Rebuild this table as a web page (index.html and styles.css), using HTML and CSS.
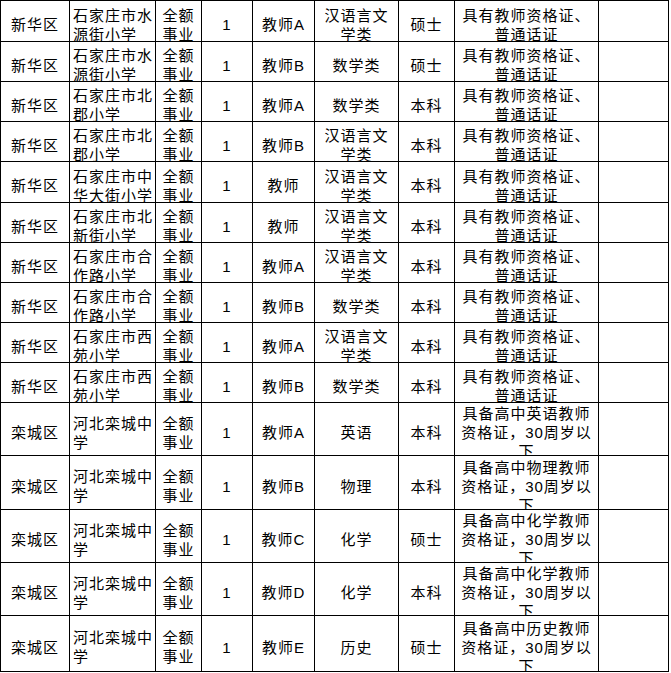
FILE: index.html
```html
<!DOCTYPE html>
<html lang="zh-CN">
<head>
<meta charset="utf-8">
<link rel="stylesheet" href="styles.css">
</head>
<body>
<div class="grid">
  <div class="c ctr r1"><span>新华区</span></div><div class="c lft r1"><span>石家庄市水源街小学</span></div><div class="c ctr r1"><span>全额事业</span></div><div class="c ctr r1"><span>1</span></div><div class="c ctr r1"><span>教师A</span></div><div class="c ctr r1"><span>汉语言文学类</span></div><div class="c ctr r1"><span>硕士</span></div><div class="c ctr r1"><span>具有教师资格证、普通话证</span></div><div class="c r1"></div>

  <div class="c ctr"><span>新华区</span></div><div class="c lft"><span>石家庄市水源街小学</span></div><div class="c ctr"><span>全额事业</span></div><div class="c ctr"><span>1</span></div><div class="c ctr"><span>教师B</span></div><div class="c ctr"><span>数学类</span></div><div class="c ctr"><span>硕士</span></div><div class="c ctr"><span>具有教师资格证、普通话证</span></div><div class="c"></div>

  <div class="c ctr"><span>新华区</span></div><div class="c lft"><span>石家庄市北郡小学</span></div><div class="c ctr"><span>全额事业</span></div><div class="c ctr"><span>1</span></div><div class="c ctr"><span>教师A</span></div><div class="c ctr"><span>数学类</span></div><div class="c ctr"><span>本科</span></div><div class="c ctr"><span>具有教师资格证、普通话证</span></div><div class="c"></div>

  <div class="c ctr"><span>新华区</span></div><div class="c lft"><span>石家庄市北郡小学</span></div><div class="c ctr"><span>全额事业</span></div><div class="c ctr"><span>1</span></div><div class="c ctr"><span>教师B</span></div><div class="c ctr"><span>汉语言文学类</span></div><div class="c ctr"><span>本科</span></div><div class="c ctr"><span>具有教师资格证、普通话证</span></div><div class="c"></div>

  <div class="c ctr"><span>新华区</span></div><div class="c lft"><span>石家庄市中华大街小学</span></div><div class="c ctr"><span>全额事业</span></div><div class="c ctr"><span>1</span></div><div class="c ctr"><span>教师</span></div><div class="c ctr"><span>汉语言文学类</span></div><div class="c ctr"><span>本科</span></div><div class="c ctr"><span>具有教师资格证、普通话证</span></div><div class="c"></div>

  <div class="c ctr"><span>新华区</span></div><div class="c lft"><span>石家庄市北新街小学</span></div><div class="c ctr"><span>全额事业</span></div><div class="c ctr"><span>1</span></div><div class="c ctr"><span>教师</span></div><div class="c ctr"><span>汉语言文学类</span></div><div class="c ctr"><span>本科</span></div><div class="c ctr"><span>具有教师资格证、普通话证</span></div><div class="c"></div>

  <div class="c ctr"><span>新华区</span></div><div class="c lft"><span>石家庄市合作路小学</span></div><div class="c ctr"><span>全额事业</span></div><div class="c ctr"><span>1</span></div><div class="c ctr"><span>教师A</span></div><div class="c ctr"><span>汉语言文学类</span></div><div class="c ctr"><span>本科</span></div><div class="c ctr"><span>具有教师资格证、普通话证</span></div><div class="c"></div>

  <div class="c ctr"><span>新华区</span></div><div class="c lft"><span>石家庄市合作路小学</span></div><div class="c ctr"><span>全额事业</span></div><div class="c ctr"><span>1</span></div><div class="c ctr"><span>教师B</span></div><div class="c ctr"><span>数学类</span></div><div class="c ctr"><span>本科</span></div><div class="c ctr"><span>具有教师资格证、普通话证</span></div><div class="c"></div>

  <div class="c ctr"><span>新华区</span></div><div class="c lft"><span>石家庄市西苑小学</span></div><div class="c ctr"><span>全额事业</span></div><div class="c ctr"><span>1</span></div><div class="c ctr"><span>教师A</span></div><div class="c ctr"><span>汉语言文学类</span></div><div class="c ctr"><span>本科</span></div><div class="c ctr"><span>具有教师资格证、普通话证</span></div><div class="c"></div>

  <div class="c ctr"><span>新华区</span></div><div class="c lft"><span>石家庄市西苑小学</span></div><div class="c ctr"><span>全额事业</span></div><div class="c ctr"><span>1</span></div><div class="c ctr"><span>教师B</span></div><div class="c ctr"><span>数学类</span></div><div class="c ctr"><span>本科</span></div><div class="c ctr"><span>具有教师资格证、普通话证</span></div><div class="c"></div>

  <div class="c ctr tall"><span>栾城区</span></div><div class="c lft tall"><span>河北栾城中学</span></div><div class="c ctr tall"><span>全额事业</span></div><div class="c ctr tall"><span>1</span></div><div class="c ctr tall"><span>教师A</span></div><div class="c ctr tall"><span>英语</span></div><div class="c ctr tall"><span>本科</span></div><div class="c ctr tall"><span>具备高中英语教师资格证，30周岁以下</span></div><div class="c tall"></div>

  <div class="c ctr tall"><span>栾城区</span></div><div class="c lft tall"><span>河北栾城中学</span></div><div class="c ctr tall"><span>全额事业</span></div><div class="c ctr tall"><span>1</span></div><div class="c ctr tall"><span>教师B</span></div><div class="c ctr tall"><span>物理</span></div><div class="c ctr tall"><span>本科</span></div><div class="c ctr tall"><span>具备高中物理教师资格证，30周岁以下</span></div><div class="c tall"></div>

  <div class="c ctr tall"><span>栾城区</span></div><div class="c lft tall"><span>河北栾城中学</span></div><div class="c ctr tall"><span>全额事业</span></div><div class="c ctr tall"><span>1</span></div><div class="c ctr tall"><span>教师C</span></div><div class="c ctr tall"><span>化学</span></div><div class="c ctr tall"><span>硕士</span></div><div class="c ctr tall"><span>具备高中化学教师资格证，30周岁以下</span></div><div class="c tall"></div>

  <div class="c ctr tall"><span>栾城区</span></div><div class="c lft tall"><span>河北栾城中学</span></div><div class="c ctr tall"><span>全额事业</span></div><div class="c ctr tall"><span>1</span></div><div class="c ctr tall"><span>教师D</span></div><div class="c ctr tall"><span>化学</span></div><div class="c ctr tall"><span>本科</span></div><div class="c ctr tall"><span>具备高中化学教师资格证，30周岁以下</span></div><div class="c tall"></div>

  <div class="c ctr tall"><span>栾城区</span></div><div class="c lft tall"><span>河北栾城中学</span></div><div class="c ctr tall"><span>全额事业</span></div><div class="c ctr tall"><span>1</span></div><div class="c ctr tall"><span>教师E</span></div><div class="c ctr tall"><span>历史</span></div><div class="c ctr tall"><span>硕士</span></div><div class="c ctr tall"><span>具备高中历史教师资格证，30周岁以下</span></div><div class="c tall"></div>
</div>
</body>
</html>
```

FILE: styles.css
```css
html, body {
  margin: 0;
  padding: 0;
  background: #ffffff;
}

.grid {
  display: grid;
  grid-template-columns: 69px 86px 46px 51px 62px 84px 56px 144px 70px;
  grid-template-rows: 41px 40px 40px 40px 41px 40px 40px 40px 40px 40px 53px 54px 53px 53px 56px;
  width: max-content;
  border-left: 1px solid #000;
  border-top: 1px solid #000;
  font-family: "Liberation Sans", "Noto Sans CJK SC", sans-serif;
  font-size: 15px;
  letter-spacing: 1px;
  line-height: 19px;
  color: #000;
}

.c {
  display: flex;
  flex-direction: column;
  justify-content: center;
  overflow: hidden;
  padding: 7px 3px 0 3px;
  border-right: 1px solid #000;
  border-bottom: 1px solid #000;
  box-sizing: border-box;
  min-width: 0;
  min-height: 0;
}

.c > span {
  flex-shrink: 0;
}

.ctr {
  text-align: center;
}

.lft {
  text-align: left;
  padding-right: 1px;
}

.tall {
  line-height: 19px;
}
```
